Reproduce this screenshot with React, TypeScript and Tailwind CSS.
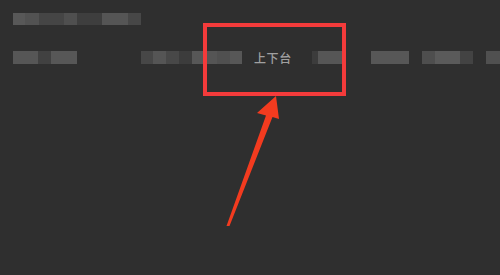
import React from "react";

type Cell = { w: number; c: string };

// pixelated (mosaic) placeholders for the blurred-out labels
const titleCells: Cell[] = [
  { w: 12, c: "#585858" },
  { w: 14, c: "#525252" },
  { w: 25, c: "#454545" },
  { w: 13, c: "#4f4f4f" },
  { w: 25, c: "#3e3e3e" },
  { w: 26, c: "#555555" },
  { w: 13, c: "#474747" },
];

const tabA: Cell[] = [
  { w: 25, c: "#565656" },
  { w: 13, c: "#414141" },
  { w: 26, c: "#575757" },
];
const tabB: Cell[] = [
  { w: 12, c: "#474747" },
  { w: 13, c: "#555555" },
  { w: 13, c: "#484848" },
  { w: 13, c: "#3c3c3c" },
  { w: 12, c: "#575757" },
  { w: 13, c: "#555555" },
  { w: 13, c: "#505050" },
  { w: 12, c: "#575757" },
];
const tabC: Cell[] = [
  { w: 6, c: "#3c3c3c" },
  { w: 24, c: "#565656" },
];
const tabD: Cell[] = [{ w: 38, c: "#575757" }];
const tabE: Cell[] = [
  { w: 13, c: "#4e4e4e" },
  { w: 25, c: "#5a5a5a" },
  { w: 13, c: "#434343" },
];
const tabF: Cell[] = [{ w: 14, c: "#505050" }];

const Mosaic = ({ cells, h = 13 }: { cells: Cell[]; h?: number }) => (
  <div className="flex shrink-0">
    {cells.map((cell, i) => (
      <div key={i} style={{ width: cell.w, height: h, background: cell.c }} />
    ))}
  </div>
);

export default function App() {
  return (
    <div
      className="relative w-[500px] h-[275px] overflow-hidden bg-[#2f2f2f]"
      style={{ fontFamily: '"Noto Sans CJK SC", "Noto Sans", sans-serif' }}
    >
      <div className="flex flex-col pl-[13px] pt-[13px]">
        <Mosaic cells={titleCells} h={12} />

        <div className="flex items-center mt-[26px] h-[13px]">
          <Mosaic cells={tabA} />
          <div className="ml-[64px]">
            <Mosaic cells={tabB} />
          </div>
          <span className="ml-[12px] text-[12px] leading-none font-medium text-[#a0a0a0] tracking-[0.6px]">
            上下台
          </span>
          <div className="ml-[20px]">
            <Mosaic cells={tabC} />
          </div>
          <div className="ml-[29px]">
            <Mosaic cells={tabD} />
          </div>
          <div className="ml-[13px]">
            <Mosaic cells={tabE} />
          </div>
          <div className="ml-[13px]">
            <Mosaic cells={tabF} />
          </div>
        </div>
      </div>

      {/* annotation: highlight box */}
      <div className="absolute left-[203px] top-[23px] w-[143px] h-[73px] border-[4px] border-[#f43b3b]" />

      {/* annotation: arrow */}
      <svg className="absolute left-0 top-0" width="500" height="275" viewBox="0 0 500 275">
        <polygon
          points="276,96 257,113 266,115.5 226.5,226 229.5,226 272.5,117 279,119"
          fill="#f33b1f"
        />
      </svg>
    </div>
  );
}
